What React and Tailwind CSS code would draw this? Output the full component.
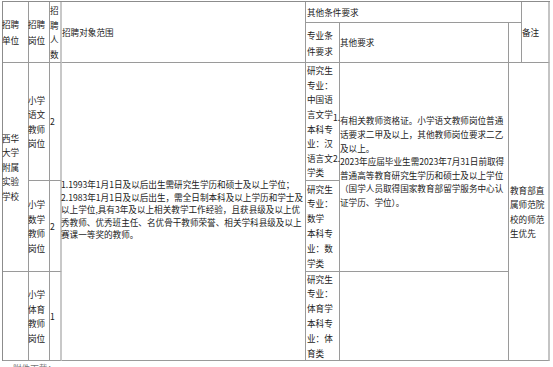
import React from "react";

const line = "border-r border-b border-[#9a9a9a]";

function Lines({ items, className = "" }) {
  return (
    <div className={"whitespace-nowrap " + className}>
      {items.map((t, i) => (
        <div key={i}>{t}</div>
      ))}
    </div>
  );
}

export default function App() {
  return (
    <div className="h-[367px] w-[553px] overflow-hidden bg-white text-[8.6px] text-[#222] font-['Noto_Sans_CJK_SC','Noto_Sans_CJK_JP',sans-serif]">
      <div className="ml-[2px] mt-[1px] grid w-[548px] grid-cols-[26px_21px_12px_244px_34px_169px_13px_28px] grid-rows-[21px_40px_118px_91px_89px] border-l border-t border-[#8c8c8c]">
        {/* 表头 */}
        <div className={`${line} col-start-1 row-start-1 row-span-2 flex items-center`}>
          <Lines className="-ml-px leading-[16px]" items={["招聘", "单位"]} />
        </div>
        <div className={`${line} col-start-2 row-start-1 row-span-2 flex items-center`}>
          <Lines className="-ml-px leading-[16px]" items={["招聘", "岗位"]} />
        </div>
        <div className="border-b border-[#9a9a9a] border-r-2 border-r-[#c8c8c8] col-start-3 row-start-1 row-span-2 flex items-center">
          <Lines className="leading-[14.5px]" items={["招", "聘", "人", "数"]} />
        </div>
        <div className={`${line} col-start-4 row-start-1 row-span-2 flex items-center`}>
          <span>招聘对象范围</span>
        </div>
        <div className={`${line} col-start-5 col-span-3 row-start-1 flex items-center pl-px`}>
          <span>其他条件要求</span>
        </div>
        <div className={`${line} col-start-5 row-start-2 flex items-center pl-px`}>
          <Lines className="leading-[16px]" items={["专业条", "件要求"]} />
        </div>
        <div className={`${line} col-start-6 row-start-2 flex items-center`}>
          <span>其他要求</span>
        </div>
        <div className={`${line} col-start-7 row-start-2`}></div>
        <div className="border-b border-[#9a9a9a] border-r-2 border-r-[#c4c4c4] col-start-8 row-start-1 row-span-2 flex items-center">
          <span>备注</span>
        </div>

        {/* 招聘单位 */}
        <div className={`${line} col-start-1 row-start-3 row-span-2 flex items-center`}>
          <Lines className="-ml-px leading-[14.5px]" items={["西华", "大学", "附属", "实验", "学校"]} />
        </div>
        <div className={`${line} col-start-1 row-start-5`}></div>

        {/* 岗位 */}
        <div className={`${line} col-start-2 row-start-3 flex items-center`}>
          <Lines className="-ml-px leading-[14.5px]" items={["小学", "语文", "教师", "岗位"]} />
        </div>
        <div className={`${line} col-start-2 row-start-4 flex items-center`}>
          <Lines className="-ml-px leading-[14.5px]" items={["小学", "数学", "教师", "岗位"]} />
        </div>
        <div className={`${line} col-start-2 row-start-5 flex items-center`}>
          <Lines className="-ml-px leading-[14.5px]" items={["小学", "体育", "教师", "岗位"]} />
        </div>

        {/* 人数 */}
        <div className="border-b border-[#9a9a9a] border-r-2 border-r-[#c8c8c8] col-start-3 row-start-3 flex items-center">
          <span>2</span>
        </div>
        <div className="border-b border-[#9a9a9a] border-r-2 border-r-[#c8c8c8] col-start-3 row-start-4 flex items-center">
          <span>2</span>
        </div>
        <div className="border-b border-[#9a9a9a] border-r-2 border-r-[#c8c8c8] col-start-3 row-start-5 flex items-center">
          <span>1</span>
        </div>

        {/* 招聘对象范围 */}
        <div className={`${line} col-start-4 row-start-3 row-span-3 flex items-center pb-[4px]`}>
          <Lines
            className="-ml-px leading-[12.6px]"
            items={[
              "1.1993年1月1日及以后出生需研究生学历和硕士及以上学位；",
              "2.1983年1月1日及以后出生，需全日制本科及以上学历和学士及",
              "以上学位,具有3年及以上相关教学工作经验，且获县级及以上优",
              "秀教师、优秀班主任、名优骨干教师荣誉、相关学科县级及以上",
              "赛课一等奖的教师。",
            ]}
          />
        </div>

        {/* 专业条件要求 */}
        <div className={`${line} col-start-5 row-start-3 flex items-center pl-px`}>
          <Lines
            className="leading-[14.6px]"
            items={["研究生", "专业：", "中国语", "言文学", "本科专", "业：汉", "语言文", "学类"]}
          />
        </div>
        <div className={`${line} col-start-5 row-start-4 flex items-center pl-px`}>
          <Lines className="leading-[14.8px]" items={["研究生", "专业：", "数学", "本科专", "业：数", "学类"]} />
        </div>
        <div className={`${line} col-start-5 row-start-5 flex items-center pl-px`}>
          <Lines className="leading-[14.8px]" items={["研究生", "专业：", "体育学", "本科专", "业：体", "育类"]} />
        </div>

        {/* 其他要求 */}
        <div className={`${line} relative col-start-6 row-start-3 row-span-2 flex items-center pb-[10px]`}>
          <span className="absolute -left-[7px] top-[50px] leading-none">1.</span>
          <span className="absolute -left-[7px] top-[91px] leading-none">2.</span>
          <Lines
            className="leading-[13.6px]"
            items={[
              "有相关教师资格证。小学语文教师岗位普通",
              "话要求二甲及以上，其他教师岗位要求二乙",
              "及以上。",
              "2023年应届毕业生需2023年7月31日前取得",
              "普通高等教育研究生学历和硕士及以上学位",
              "（国学人员取得国家教育部留学服务中心认",
              "证学历、学位）。",
            ]}
          />
        </div>
        <div className={`${line} col-start-6 row-start-5`}></div>

        {/* 备注 */}
        <div className="border-b border-[#9a9a9a] border-r-2 border-r-[#c4c4c4] col-start-7 col-span-2 row-start-3 row-span-3 flex items-center pl-px">
          <Lines className="leading-[14.3px]" items={["教育部直", "属师范院", "校的师范", "生优先"]} />
        </div>
      </div>
      <div className="mt-px pl-[13px] leading-[13px] text-[#777]">附件下载：</div>
    </div>
  );
}
